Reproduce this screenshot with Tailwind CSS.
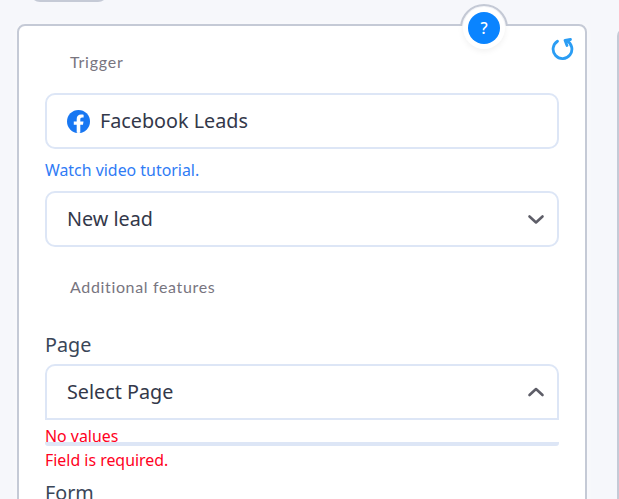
<!DOCTYPE html>
<html lang="en">
<head>
    <meta charset="UTF-8">
    <title>Trigger</title>
    <script src="https://cdn.jsdelivr.net/npm/@tailwindcss/browser@4"></script>
</head>
<body class="bg-[#f6f7fb] h-[499px] w-[619px] overflow-hidden font-['Noto_Sans',sans-serif]">
    <div class="relative h-[499px] overflow-hidden">
        <!-- bits of neighbouring elements -->
        <div class="absolute left-[30px] top-[-20px] w-[78px] h-[22px] rounded-[10px] bg-[#c5cad6]"></div>
        <div class="absolute left-[617px] top-[28px] w-[40px] h-[500px] rounded-[8px] bg-white border-2 border-[#c5cad6]"></div>

        <!-- Card -->
        <div class="absolute left-[17px] top-[24px] w-[570px] h-[520px] bg-white border-2 border-[#c5cad6] rounded-[8px] pl-[26px] pr-[26px] shadow-[0_0_8px_rgba(255,255,255,0.6)]">
            <!-- help button -->
            <div class="absolute left-[441px] top-[-22px] w-[48px] h-[48px] rounded-full bg-[#f6f7fb] border-2 border-[#c5cad6] [clip-path:inset(0_0_26px_0)]"></div>
            <div class="absolute left-[444px] top-[-19px] w-[42px] h-[42px] rounded-full bg-white shadow-[0_2px_6px_rgba(0,0,0,0.06)] flex items-center justify-center">
                <div class="w-8 h-8 rounded-full bg-[#0a84ff] text-white text-base font-medium flex items-center justify-center">?</div>
            </div>
            <!-- reset icon -->
            <svg class="absolute left-[531px] top-[11px]" width="24" height="24" viewBox="0 0 24 24" fill="none" stroke="#2a9df4" stroke-width="2.8" stroke-linecap="round" stroke-linejoin="round">
                <path d="M7.5 4.2A9.4 9.4 0 1 0 16.8 3.8"/>
                <path d="M20.5 2.5L15 3.3L17 8.5"/>
            </svg>

            <div class="pl-[25px] pt-[26px] h-[67px] font-['Lato',sans-serif] text-[16px] leading-[20px] tracking-[0.8px] text-[#78757f]">Trigger</div>

            <div class="h-[56px] border-2 border-[#dde6f6] rounded-[10px] flex items-center pl-[20px] text-[#33384a] text-[19.75px]">
                <svg width="23" height="23" viewBox="0 0 24 24" class="mr-[10px]">
                    <circle cx="12" cy="12" r="12" fill="#1877f2"/>
                    <path fill="#fff" d="M16.67 15.47L17.2 12h-3.33V9.75c0-.95.47-1.87 1.96-1.87h1.51V4.92s-1.37-.23-2.69-.23c-2.74 0-4.53 1.66-4.53 4.67V12H7.08v3.47h3.04v8.38a12 12 0 0 0 3.75 0v-8.38h2.8z"/>
                </svg>
                Facebook Leads
            </div>

            <div class="mt-[10px] text-[#2f7bf5] text-[15.9px] leading-[22px]">Watch video tutorial.</div>

            <div class="mt-[10px] h-[56px] border-2 border-[#dde6f6] rounded-[10px] flex items-center justify-between pl-[20px] pr-[11px] text-[#33384a] text-[19.75px]">
                New lead
                <svg width="20" height="18" viewBox="0 0 20 18" fill="none" stroke="#5e5e68" stroke-width="2.6" stroke-linecap="round" stroke-linejoin="round"><path d="M3.5 6.5L10 12.5L16.5 6.5"/></svg>
            </div>

            <div class="pl-[25px] mt-[30px] font-['Lato',sans-serif] text-[16px] leading-[20px] tracking-[0.65px] text-[#78757f]">Additional features</div>

            <div class="mt-[35px] text-[19.75px] leading-[26px] text-[#3a4658]">Page</div>

            <div class="relative mt-[6px]">
                <div class="h-[56px] border-2 border-[#dde6f6] rounded-t-[10px] flex items-center justify-between pl-[20px] pr-[11px] text-[#33384a] text-[19.75px]">
                    Select Page
                    <svg width="20" height="18" viewBox="0 0 20 18" fill="none" stroke="#5e5e68" stroke-width="2.6" stroke-linecap="round" stroke-linejoin="round"><path d="M3.5 12L10 6L16.5 12"/></svg>
                </div>
                <div class="h-[26px] border-b-[4px] border-[#dde6f6] rounded-b-[3px]"></div>
                <div class="absolute left-0 top-[61px] text-[#ff0022] text-[15.9px] leading-[22px]">No values</div>
            </div>

            <div class="mt-[3px] text-[#ff0022] text-[15.9px] leading-[22px]">Field is required.</div>
            <div class="mt-[9px] text-[19.75px] leading-[26px] text-[#3a4658]">Form</div>
        </div>
    </div>
</body>
</html>
